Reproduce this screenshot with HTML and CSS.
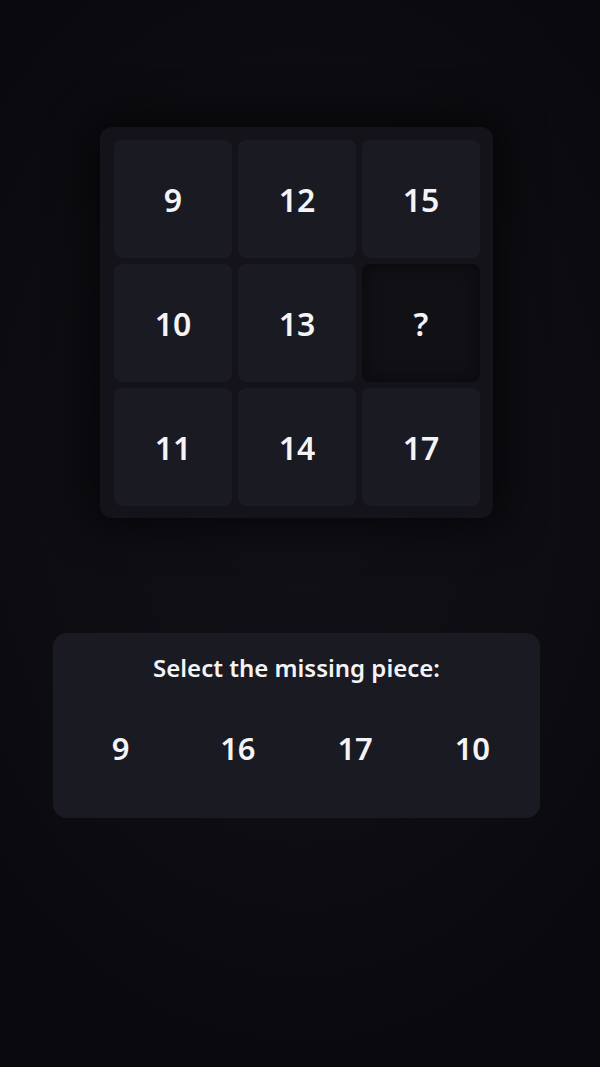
FILE: index.html
```html
<!DOCTYPE html>
<html lang="en">
<head>
    <meta charset="UTF-8">
    <meta name="viewport" content="width=device-width, initial-scale=1.0">
    <title>Missing Piece</title>
    <link rel="stylesheet" href="styles.css">
</head>
<body>
    <div class="board">
        <div class="tile">9</div>
        <div class="tile">12</div>
        <div class="tile">15</div>
        <div class="tile">10</div>
        <div class="tile">13</div>
        <div class="tile empty">?</div>
        <div class="tile">11</div>
        <div class="tile">14</div>
        <div class="tile">17</div>
    </div>

    <div class="choices">
        <div class="choices-title">Select the missing piece:</div>
        <div class="options">
            <button class="option">9</button>
            <button class="option">16</button>
            <button class="option">17</button>
            <button class="option">10</button>
        </div>
    </div>
</body>
</html>
```

FILE: styles.css
```css
html, body {
    height: 100%;
}

body {
    margin: 0;
    padding-right: 7px;
    box-sizing: border-box;
    font-family: 'Noto Sans', 'Open Sans', sans-serif;
    color: #f4f4f6;
    background-color: #0b0b10;
    background-image: radial-gradient(ellipse 70% 55% at 50% 45%, #101016 0%, #0d0d12 60%, #0a0a0e 100%);
    display: flex;
    flex-direction: column;
    align-items: center;
}

.board {
    margin-top: 127px;
    padding: 13px 13px 12px 14px;
    display: grid;
    grid-template-columns: repeat(3, 118px);
    grid-auto-rows: 118px;
    gap: 6px;
    background-color: #131319;
    border-radius: 12px;
    box-shadow: 0 0 40px 10px rgba(0, 0, 0, 0.55);
}

.tile {
    display: flex;
    align-items: center;
    justify-content: center;
    background-color: #1a1a22;
    border-radius: 8px;
    font-size: 32px;
    font-weight: 600;
}

.tile.empty {
    background-color: #101015;
    box-shadow: inset 0 0 20px rgba(0, 0, 0, 0.4);
}

.choices {
    margin-top: 115px;
    width: 487px;
    height: 185px;
    box-sizing: border-box;
    padding: 19px 9px 0;
    background-color: #1a1a22;
    border-radius: 14px;
}

.choices-title {
    text-align: center;
    font-size: 24px;
    font-weight: 600;
    line-height: 32px;
}

.options {
    margin-top: 34px;
    display: grid;
    grid-template-columns: repeat(4, 1fr);
}

.option {
    height: 60px;
    padding: 0;
    border: none;
    background: none;
    color: #f4f4f6;
    font-family: inherit;
    font-size: 31px;
    font-weight: 600;
    cursor: pointer;
}
```
